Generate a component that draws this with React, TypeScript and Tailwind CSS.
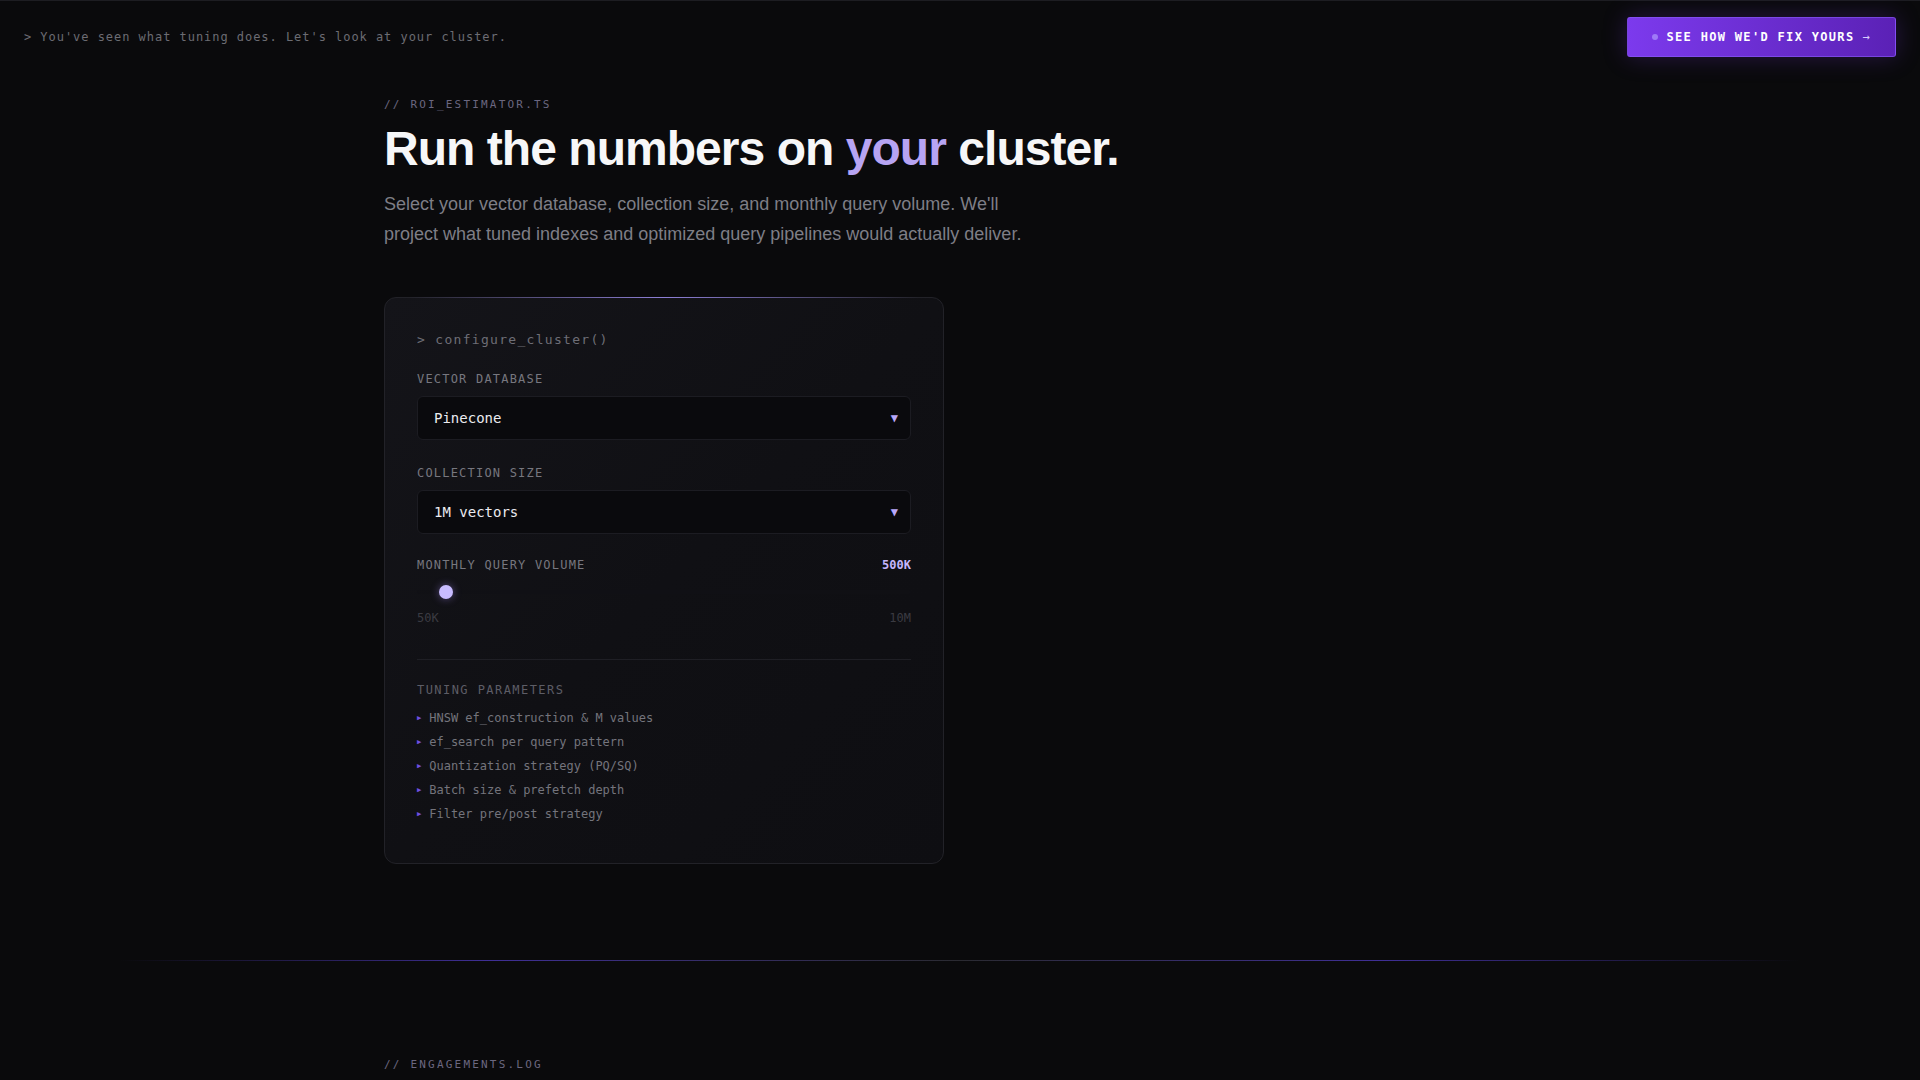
import { ReactNode } from "react";

/* ------------------------------------------------------------------ */
/*  Data                                                               */
/* ------------------------------------------------------------------ */

const TUNING_PARAMS = [
  "HNSW ef_construction & M values",
  "ef_search per query pattern",
  "Quantization strategy (PQ/SQ)",
  "Batch size & prefetch depth",
  "Filter pre/post strategy",
];

// slider: 50K .. 10M, current 500K
const QUERY_MIN = 50_000;
const QUERY_MAX = 10_000_000;
const QUERY_VALUE = 500_000;

/* ------------------------------------------------------------------ */
/*  Bits                                                               */
/* ------------------------------------------------------------------ */

function FieldLabel({ children }: { children: ReactNode }) {
  return (
    <p className="text-[12px] leading-[18px] tracking-[0.1em] text-[#77777f] uppercase">
      {children}
    </p>
  );
}

function FakeSelect({ value }: { value: string }) {
  return (
    <div className="mt-2 flex h-[44px] items-center justify-between rounded-md border border-[#1c1c22] bg-[#0a0a0d] pr-3 pl-4 text-[14px] text-[#ececf0]">
      <span>{value}</span>
      <span className="text-[12px] text-[#b9a8fa]">▼</span>
    </div>
  );
}

/* ------------------------------------------------------------------ */
/*  Page                                                               */
/* ------------------------------------------------------------------ */

export default function App() {
  const pct = (QUERY_VALUE - QUERY_MIN) / (QUERY_MAX - QUERY_MIN);

  return (
    <div className="min-h-screen bg-[#0a0a0c] font-['DejaVu_Sans_Mono',monospace] text-white">
      {/* top bar */}
      <header className="flex items-center justify-between border-t border-[#1d1d22] px-6 py-4">
        <p className="text-[12px] tracking-[0.08em] text-[#6c6c73]">
          &gt; You've seen what tuning does. Let's look at your cluster.
        </p>
        <button className="flex h-10 items-center gap-2 rounded-[3px] border border-[#8b5cf6]/60 bg-gradient-to-r from-[#7c3aed] to-[#5b21b6] px-6 text-[12px] font-bold tracking-[0.11em] text-white shadow-[0_0_24px_rgba(124,58,237,0.25)]">
          <span className="h-1.5 w-1.5 rounded-full bg-[#a78bfa]/80" />
          <span>SEE HOW WE'D FIX YOURS</span>
          <span className="font-normal text-[#d9ccff]">→</span>
        </button>
      </header>

      {/* ROI estimator */}
      <section className="mx-auto max-w-6xl pt-6 pb-24">
        <p className="text-[11px] leading-4 tracking-[0.2em] text-[#6b6780]">// ROI_ESTIMATOR.TS</p>
        <h1 className="mt-1.5 font-['Liberation_Sans',Arial,sans-serif] text-5xl leading-[60px] font-bold tracking-[-0.02em] text-[#f7f7f8]">
          Run the numbers on <span className="text-[#b7a4f3]">your</span> cluster.
        </h1>
        <p className="mt-2.5 max-w-2xl font-['Liberation_Sans',Arial,sans-serif] text-lg leading-[30px] text-[#7e7e86]">
          Select your vector database, collection size, and monthly query volume. We'll
          project what tuned indexes and optimized query pipelines would actually deliver.
        </p>

        <div className="mt-12 grid grid-cols-2 gap-8">
          <div className="relative rounded-xl border border-[#222228] bg-gradient-to-br from-[#141419] via-[#101014] to-[#0e0e12] px-8 pt-8 pb-10">
            {/* top glow edge */}
            <div className="absolute -top-px right-6 left-6 h-px bg-gradient-to-r from-transparent via-[#8d7fd6] to-transparent" />

            <p className="text-[13px] leading-5 tracking-[0.1em] text-[#6e6e76]">&gt; configure_cluster()</p>

            <div className="mt-5">
              <FieldLabel>Vector Database</FieldLabel>
              <FakeSelect value="Pinecone" />
            </div>

            <div className="mt-6">
              <FieldLabel>Collection Size</FieldLabel>
              <FakeSelect value="1M vectors" />
            </div>

            <div className="mt-[22px]">
              <div className="flex items-center justify-between">
                <FieldLabel>Monthly Query Volume</FieldLabel>
                <span className="text-[12px] leading-[18px] font-bold text-[#c4b5fd]">500K</span>
              </div>
              {/* range track, thumb sits on it */}
              <div className="relative mt-[11px] h-3.5">
                <div className="absolute top-1/2 right-0 left-0 h-1 -translate-y-1/2 rounded-full bg-[#111115]/60" />
                <div
                  className="absolute top-0 h-3.5 w-3.5 rounded-full bg-[#c8bcff] shadow-[0_0_8px_rgba(167,139,250,0.45)]"
                  style={{ left: `calc(${pct * 100}% - ${pct * 14}px)` }}
                />
              </div>
              <div className="mt-2.5 flex justify-between text-[12px] leading-[18px] text-[#3b3b42]">
                <span>50K</span>
                <span>10M</span>
              </div>
            </div>

            <div className="mt-8 border-t border-[#1f1f25] pt-[21px]">
              <p className="text-[12px] leading-[18px] tracking-[0.12em] text-[#5d5d66]">TUNING PARAMETERS</p>
              <ul className="mt-2.5 flex flex-col gap-1.5">
                {TUNING_PARAMS.map((t) => (
                  <li key={t} className="flex items-center gap-2 text-[12px] leading-[18px] text-[#74747c]">
                    <span className="text-[7px] text-[#7050e0]">▶</span>
                    {t}
                  </li>
                ))}
              </ul>
            </div>
          </div>
          <div />
        </div>
      </section>

      {/* section divider */}
      <div className="mx-[120px] h-px bg-[linear-gradient(90deg,transparent,#3f2f96_22%,#2a2a31_50%,#3f2f96_75%,transparent)]" />

      <section className="mx-auto max-w-6xl pt-24 pb-24">
        <p className="text-[11px] leading-4 tracking-[0.2em] text-[#6b6780]">// ENGAGEMENTS.LOG</p>
      </section>
    </div>
  );
}
